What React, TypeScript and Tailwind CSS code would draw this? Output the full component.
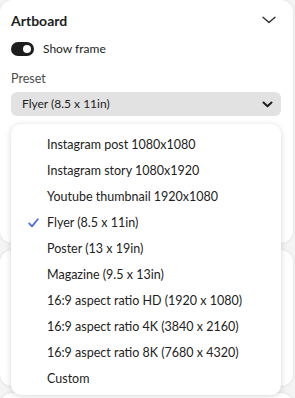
import React from 'react';

const presets = [
  'Instagram post 1080x1080',
  'Instagram story 1080x1920',
  'Youtube thumbnail 1920x1080',
  'Flyer (8.5 x 11in)',
  'Poster (13 x 19in)',
  'Magazine (9.5 x 13in)',
  '16:9 aspect ratio HD (1920 x 1080)',
  '16:9 aspect ratio 4K (3840 x 2160)',
  '16:9 aspect ratio 8K (7680 x 4320)',
  'Custom',
];

const selected = 'Flyer (8.5 x 11in)';

export default function App() {
  return (
    <div
      className="w-[295px] h-[398px] overflow-hidden bg-[#f4f4f4] pr-[2px] text-[#222]"
      style={{ fontFamily: 'Lato, "Open Sans", sans-serif' }}
    >
      <div className="flex flex-col gap-[7px]">
        {/* Artboard card */}
        <div className="relative h-[243px] rounded-[12px] bg-white shadow-[0_0_3px_rgba(0,0,0,0.12)] pl-[11px] pr-[12px]">
          <div className="flex h-[40px] items-center justify-between">
            <span className="text-[14px] font-bold text-[#1e1e1e]">Artboard</span>
            <svg width="14" height="8" viewBox="0 0 14 8" className="mr-[5px]">
              <path d="M1 1.2 L7 6.6 L13 1.2" fill="none" stroke="#2c2c2c" strokeWidth="1.3" strokeLinecap="round" strokeLinejoin="round" />
            </svg>
          </div>

          <div className="flex h-[18px] items-center gap-[9px]">
            <div className="flex h-[14px] w-[23px] items-center justify-end rounded-full bg-[#1d1d1d] pr-[3px]">
              <div className="h-[8px] w-[8px] rounded-full bg-white" />
            </div>
            <span className="text-[12px] text-[#222]">Show frame</span>
          </div>

          <div className="mt-[12px] text-[12.5px] leading-[18px] text-[#4b4b4b]">Preset</div>

          <div className="mt-[4px] flex h-[24px] items-center justify-between rounded-[6px] bg-[#e2e2e2] pl-[11px] pr-[8px]">
            <span className="text-[12px] text-[#222]">{selected}</span>
            <svg width="11" height="7" viewBox="0 0 11 7">
              <path d="M1.5 1.5 L5.5 5.3 L9.5 1.5" fill="none" stroke="#1e1e1e" strokeWidth="2" strokeLinecap="round" strokeLinejoin="round" />
            </svg>
          </div>

          {/* Preset menu */}
          <div className="absolute left-[11px] top-[124px] z-10 w-[270px] rounded-[10px] bg-white pt-[8px] pb-[3px] shadow-[0_1px_6px_rgba(0,0,0,0.16)]">
            {presets.map((p) => (
              <div key={p} className="flex h-[26px] items-center">
                <div className="flex w-[36px] justify-end pr-[8px]">
                  {p === selected && (
                    <svg width="11" height="10" viewBox="0 0 11 10">
                      <path d="M1.2 5.4 L4 8.4 L9.8 1.2" fill="none" stroke="#4a6cf0" strokeWidth="1.8" strokeLinecap="round" strokeLinejoin="round" />
                    </svg>
                  )}
                </div>
                <span className="text-[12.5px] text-[#222]">{p}</span>
              </div>
            ))}
          </div>
        </div>

        {/* cards below, hidden under the menu */}
        <div className="h-[136px] rounded-[12px] bg-white shadow-[0_0_3px_rgba(0,0,0,0.12)]" />
        <div className="h-[120px] rounded-[12px] bg-white shadow-[0_0_3px_rgba(0,0,0,0.12)]" />
      </div>
    </div>
  );
}
